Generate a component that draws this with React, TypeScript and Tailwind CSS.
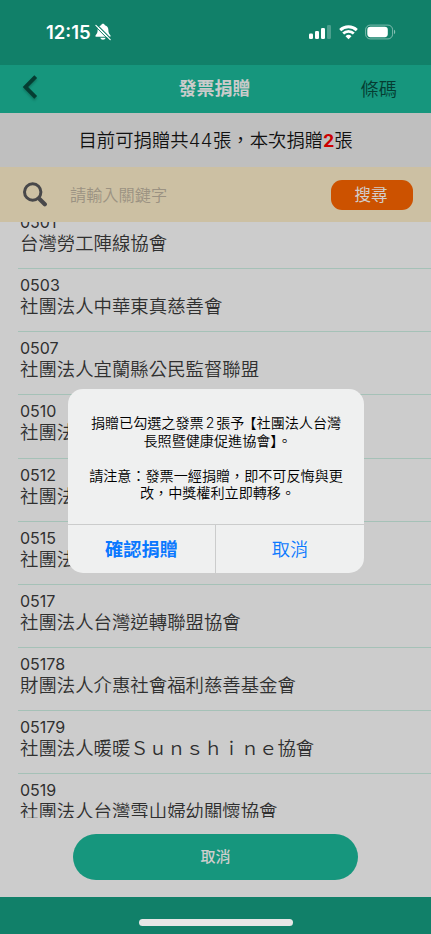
type Organization = {
  code: string;
  name: string;
};

const organizations: Organization[] = [
  { code: "0501", name: "台灣勞工陣線協會" },
  { code: "0503", name: "社團法人中華東真慈善會" },
  { code: "0507", name: "社團法人宜蘭縣公民監督聯盟" },
  { code: "0510", name: "社團法人" },
  { code: "0512", name: "社團法人" },
  { code: "0515", name: "社團法人" },
  { code: "0517", name: "社團法人台灣逆轉聯盟協會" },
  { code: "05178", name: "財團法人介惠社會福利慈善基金會" },
  { code: "05179", name: "社團法人暖暖Ｓｕｎｓｈｉｎｅ協會" },
  { code: "0519", name: "社團法人台灣雪山婦幼關懷協會" },
];

function StatusBar() {
  return (
    <div className="flex h-[65px] shrink-0 items-start bg-[#118069] pl-[46px] pr-[35px] pt-[22px] text-white">
      <span className="text-[18.500px] font-semibold leading-[21px]">12:15</span>
      <svg className="ml-[3px] mt-[1px]" width="18" height="18" viewBox="0 0 18 18">
        <path
          d="M9 .8c-1 0-1.700.6-1.900 1.500C4.700 3 3.600 4.900 3.600 7.300c0 2.500-.6 3.500-1.800 4.600-.8.8-.4 1.900.7 1.900h13c1.100 0 1.500-1.100.7-1.900-1.200-1.100-1.800-2.100-1.800-4.600 0-2.400-1.100-4.300-3.500-5C10.700 1.400 10 .8 9 .8ZM6.300 14.800c.3 1.300 1.400 1.900 2.700 1.900s2.400-.6 2.700-1.900Z"
          fill="currentColor"
        />
        <path d="M2.700 1.500 17 15.800" stroke="#118069" strokeWidth="1.200" />
        <path d="M1.900 2.400 16.200 16.600" stroke="currentColor" strokeWidth="1.200" strokeLinecap="round" />
        <path d="M1.100 3.200 15.400 17.500" stroke="#118069" strokeWidth="1" />
      </svg>
      <div className="ml-auto mt-[2px] flex items-center">
        <svg width="22" height="16" viewBox="0 0 22 16" fill="currentColor">
          <rect x="0" y="9.500" width="4" height="5.500" rx="1.200" />
          <rect x="6" y="7" width="4" height="8" rx="1.200" />
          <rect x="12" y="4" width="4" height="11" rx="1.200" />
          <rect x="18" y="1" width="4" height="14" rx="1.200" opacity=".25" />
        </svg>
        <svg className="ml-[7.500px]" width="19" height="16" viewBox="0 0 19 16" fill="none" stroke="currentColor">
          <path d="M1.200 6.100a12 12 0 0 1 16.600 0" strokeWidth="2.900" />
          <path d="M4.200 9.500a7.600 7.600 0 0 1 10.600 0" strokeWidth="2.700" />
          <path d="M9.500 15.200 6.500 12.200a4.300 4.300 0 0 1 6 0Z" fill="currentColor" stroke="none" />
        </svg>
        <svg className="ml-[7.500px]" width="31" height="16" viewBox="0 0 31 16">
          <rect x=".6" y="1.100" width="27" height="13.800" rx="4.600" fill="none" stroke="#fff" strokeOpacity=".45" />
          <rect x="2.300" y="2.800" width="20.500" height="10.400" rx="3.100" fill="#fff" />
          <path d="M29 5.800c1.600.6 1.600 3.800 0 4.400Z" fill="#fff" opacity=".5" />
        </svg>
      </div>
    </div>
  );
}

function NavBar() {
  return (
    <div className="grid h-[48px] shrink-0 grid-cols-[1fr_80px_1fr] items-center bg-[#16967d] pl-[22px] pr-[34px]">
      <svg
        className="mt-[-4px] drop-shadow-[0_2px_1px_rgba(0,60,45,0.35)]"
        width="18"
        height="26"
        viewBox="0 0 18 26"
        fill="none"
        stroke="#053d32"
        strokeWidth="3.900"
      >
        <path d="M13.700 2.600 3.500 13 13.700 23.400" />
      </svg>
      <h1 className="whitespace-nowrap pl-[9px] text-center text-[18px] font-bold leading-[24px] text-[#cbcbcb]">
        發票捐贈
      </h1>
      <button className="text-right text-[18.200px] font-[350] leading-[24px] text-[#053d32]">條碼</button>
    </div>
  );
}

function SearchBar() {
  return (
    <div className="flex h-[55px] shrink-0 items-center bg-[#ccc0a3] pl-[23px] pr-[18px]">
      <svg width="25" height="25" viewBox="0 0 25 25" fill="none" stroke="#48484a">
        <circle cx="9.700" cy="10" r="8.200" strokeWidth="3" />
        <path d="m16 16.500 5.800 5.700" strokeWidth="4.200" strokeLinecap="round" />
      </svg>
      <span className="ml-[22px] text-[16.200px] font-[350] leading-[24px] text-[#9b9282]">請輸入關鍵字</span>
      <button className="ml-auto h-[30px] w-[82px] rounded-[11px] bg-[#cc5200] pr-[2px] text-[16.500px] leading-[24px] text-[#d2cdca]">
        搜尋
      </button>
    </div>
  );
}

function OrganizationRow({ code, name }: Organization) {
  return (
    <li className="ml-[18px] h-[63.130px] border-b border-[#a5c1b7] pl-[2px] pt-[6px] text-[#303030]">
      <p className="text-[16px] leading-[20px]">{code}</p>
      <p className="whitespace-nowrap text-[18.400px] font-[350] leading-[23px]">{name}</p>
    </li>
  );
}

function ConfirmDialog() {
  return (
    <div className="absolute inset-0 z-10">
      <div className="ml-[68px] mt-[389px] flex h-[184px] w-[296px] flex-col overflow-hidden rounded-[15px] bg-[#eff0f0]">
        <div className="h-[135px] whitespace-nowrap pt-[25px] text-center text-[14.100px] font-[350] leading-[17.600px] text-black">
          <p>
            捐贈已勾選之發票<span className="mx-[2px]">2</span>張予<span className="ml-[-2px]">【社團法人台灣</span>
          </p>
          <p className="pl-[3px]">長照暨健康促進協會】。</p>
          <p className="mt-[17.600px]">請注意：發票一經捐贈，即不可反悔與更</p>
          <p className="pl-[3px]">改，中獎權利立即轉移。</p>
        </div>
        <div className="grid flex-1 grid-cols-2 border-t border-[#cbcccc] text-[18.200px] leading-[24px] text-[#0a78ff]">
          <button className="border-r border-[#cbcccc] font-bold">確認捐贈</button>
          <button className="font-[350]">取消</button>
        </div>
      </div>
    </div>
  );
}

export default function App() {
  return (
    <main
      lang="zh-TW"
      className="relative flex h-[934px] w-[431px] flex-col overflow-hidden bg-[#cccccc] font-[Inter,'Noto_Sans_CJK_TC',sans-serif]"
    >
      <StatusBar />
      <NavBar />
      <div className="flex h-[54px] shrink-0 items-center justify-center bg-[#bfbfbf] text-[18.400px] font-[350] leading-[24px] text-[#111]">
        <p>
          目前可捐贈共<span className="tracking-[0.5px]">44</span>張，本次捐贈
          <span className="font-[Roboto,sans-serif] text-[19px] font-bold text-[#cc0000]">2</span>張
        </p>
      </div>
      <SearchBar />
      <ul className="h-[596px] shrink-0 overflow-hidden">
        <div className="mt-[-16px]">
          {organizations.map((item) => (
            <OrganizationRow key={item.code} {...item} />
          ))}
        </div>
      </ul>
      <div className="flex flex-1 items-start justify-center pt-[16px]">
        <button className="h-[46px] w-[285px] rounded-full bg-[#16967d] text-[15px] font-medium text-[#cecece]">取消</button>
      </div>
      <div className="flex h-[37px] shrink-0 justify-center bg-[#118069] pt-[22px]">
        <div className="h-[7px] w-[154px] rounded-full bg-[#e6e6e6]" />
      </div>
      <ConfirmDialog />
    </main>
  );
}
